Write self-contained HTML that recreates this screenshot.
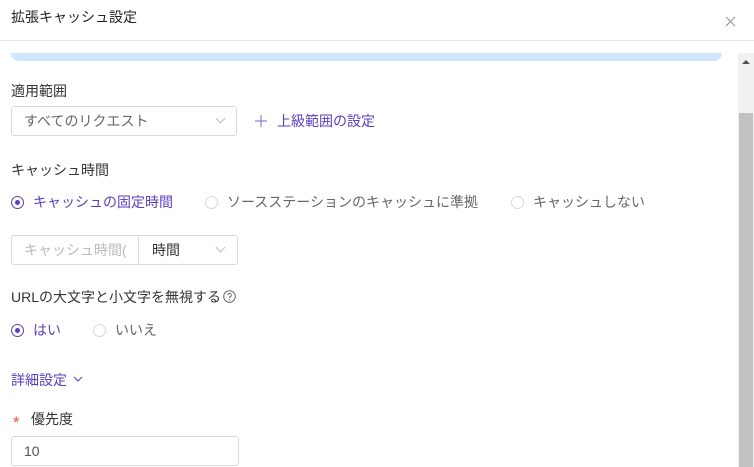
<!DOCTYPE html>
<html><head><meta charset="utf-8"><style>
*{margin:0;padding:0;box-sizing:border-box}
body{width:754px;height:467px;overflow:hidden;background:#fff;position:relative;font-family:"Liberation Sans","Noto Sans CJK JP",sans-serif;font-size:14px;color:#333}
.a{position:absolute;white-space:nowrap;line-height:18px}
.p{color:#5a3fc0}
.g{color:#666}
.box{position:absolute;border:1px solid #d9d9d9;border-radius:3px;background:#fff}
.rad{position:absolute;width:13px;height:13px;border:1px solid #d9d9d9;border-radius:50%}
.rad.on{border-color:#5a3fc0}
.rad.on:after{content:"";position:absolute;left:3px;top:3px;width:5px;height:5px;border-radius:50%;background:#5a3fc0}
.chev{position:absolute;width:7px;height:7px;border-right:1px solid #bbb;border-bottom:1px solid #bbb;transform:rotate(45deg)}
</style></head><body>
<div class="a" style="left:11px;top:8px;font-size:14px;color:#222">拡張キャッシュ設定</div>
<svg class="a" style="left:725px;top:16px" width="11" height="11"><path d="M1 1L10 10M10 1L1 10" stroke="#999" stroke-width="1.2"/></svg>
<div class="a" style="left:0;top:40px;width:754px;height:1px;background:#e6e6e6"></div>
<div class="a" style="left:11px;top:53px;width:711px;height:8px;background:#d0e6fd;border-radius:0 0 8px 8px"></div>
<div class="a" style="left:738px;top:53px;width:16px;height:414px;background:#f1f1f1"></div>
<div class="a" style="left:739px;top:113px;width:14px;height:354px;background:#c1c1c1"></div>
<svg class="a" style="left:742px;top:59px" width="8" height="5"><path d="M0 5L4 1L8 5Z" fill="#505050"/></svg>

<div class="a" style="left:11px;top:82px">適用範囲</div>
<div class="box" style="left:11px;top:106px;width:226px;height:30px"></div>
<div class="a g" style="left:24px;top:112px">すべてのリクエスト</div>
<div class="chev" style="left:217px;top:115px"></div>
<svg class="a" style="left:255px;top:115px" width="12" height="12"><path d="M6 0V12M0 6H12" stroke="#7a64cc" stroke-width="1"/></svg>
<div class="a p" style="left:277px;top:112px">上級範囲の設定</div>

<div class="a" style="left:11px;top:161px">キャッシュ時間</div>
<div class="rad on" style="left:11px;top:196px"></div>
<div class="a p" style="left:33px;top:193px">キャッシュの固定時間</div>
<div class="rad" style="left:205px;top:196px"></div>
<div class="a g" style="left:227px;top:193px">ソースステーションのキャッシュに準拠</div>
<div class="rad" style="left:511px;top:196px"></div>
<div class="a g" style="left:533px;top:193px">キャッシュしない</div>

<div class="box" style="left:11px;top:235px;width:227px;height:30px"></div>
<div class="a" style="left:138px;top:236px;width:1px;height:28px;background:#d9d9d9"></div>
<div class="a" style="left:24px;top:241px;color:#bbb;width:103px;overflow:hidden">キャッシュ時間(</div>
<div class="a" style="left:152px;top:241px">時間</div>
<div class="chev" style="left:217px;top:244px"></div>

<div class="a" style="left:11px;top:288px">URLの大文字と小文字を無視する</div>
<svg class="a" style="left:223px;top:290px" width="13" height="13"><circle cx="6.5" cy="6.5" r="5.8" fill="none" stroke="#666" stroke-width="1"/><path d="M4.7 5.2A1.8 1.8 0 1 1 6.5 7V8" fill="none" stroke="#666" stroke-width="1"/><circle cx="6.5" cy="9.7" r=".6" fill="#666"/></svg>
<div class="rad on" style="left:11px;top:324px"></div>
<div class="a p" style="left:33px;top:321px">はい</div>
<div class="rad" style="left:93px;top:324px"></div>
<div class="a g" style="left:115px;top:321px">いいえ</div>

<div class="a p" style="left:11px;top:371px">詳細設定</div>
<svg class="a" style="left:73px;top:376px" width="10" height="7"><path d="M1 1L5 5L9 1" fill="none" stroke="#5a3fc0" stroke-width="1.1"/></svg>

<div class="a" style="left:13px;top:414px;color:#f5553d;font-size:17px">*</div>
<div class="a" style="left:31px;top:410px">優先度</div>
<div class="box" style="left:11px;top:436px;width:228px;height:30px"></div>
<div class="a" style="left:24px;top:442px;color:#555">10</div>
</body></html>
